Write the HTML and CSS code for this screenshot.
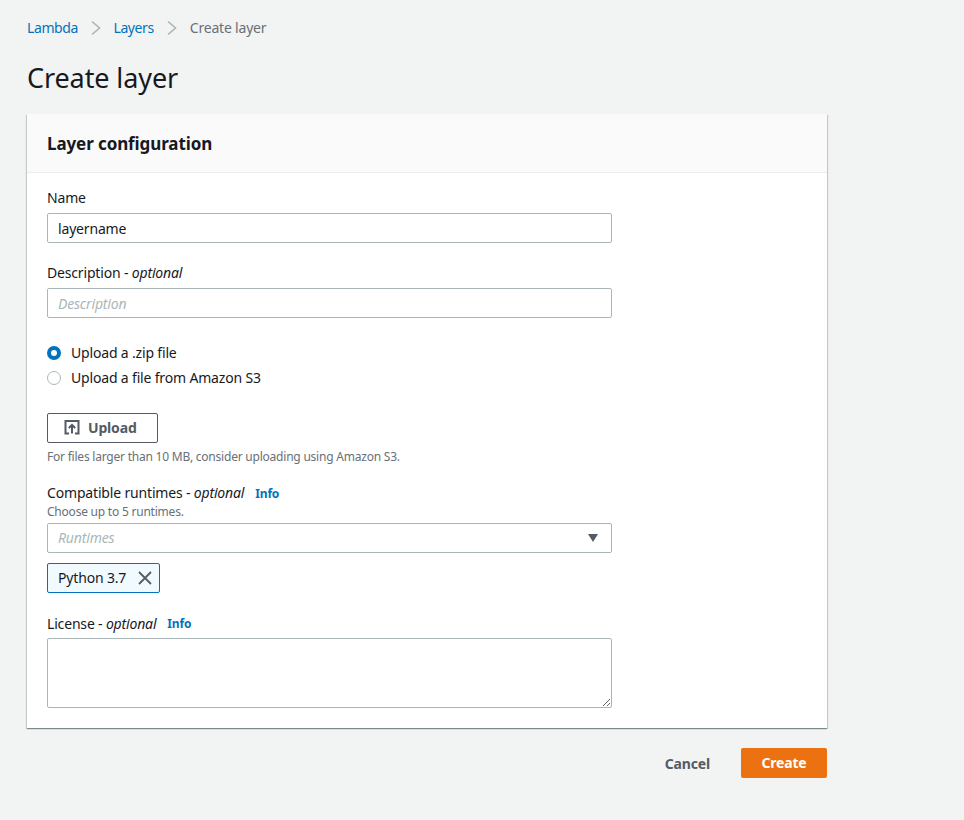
FILE: index.html
```html
<!DOCTYPE html>
<html lang="en">
  <head>
    <meta charset="UTF-8" />
    <title>Create layer</title>
    <link rel="stylesheet" href="styles.css">
  </head>
  <body>
    <nav class="breadcrumb">
      <a href="#">Lambda</a>
      <svg class="crumb-sep" width="12" height="16" viewBox="0 0 12 16"><path d="M2 1.5 L9.5 8 L2 14.5" /></svg>
      <a href="#">Layers</a>
      <svg class="crumb-sep" width="12" height="16" viewBox="0 0 12 16"><path d="M2 1.5 L9.5 8 L2 14.5" /></svg>
      <span class="crumb-current">Create layer</span>
    </nav>

    <h1>Create layer</h1>

    <section class="card">
      <header class="card-header"><h2>Layer configuration</h2></header>
      <div class="card-body">
        <div class="field">
          <label>Name</label>
          <div class="input">layername</div>
        </div>

        <div class="field">
          <label>Description - <i>optional</i></label>
          <div class="input placeholder">Description</div>
        </div>

        <div class="radios">
          <div class="radio-row"><span class="radio checked"></span>Upload a .zip file</div>
          <div class="radio-row"><span class="radio"></span>Upload a file from Amazon S3</div>
        </div>

        <button class="upload-btn">
          <svg width="16" height="16" viewBox="0 0 16 16"><path d="M5 2 H14.5 V14.5 H11 M5 14.5 H1.5 V2 H5 M8 14.5 V6 M4.8 9 L8 5.8 L11.2 9" /></svg>
          Upload
        </button>
        <p class="help upload-help">For files larger than 10 MB, consider uploading using Amazon S3.</p>

        <div class="label-row runtimes-label">
          <label>Compatible runtimes - <i>optional</i></label>
          <a class="info" href="#">Info</a>
        </div>
        <p class="help runtimes-help">Choose up to 5 runtimes.</p>
        <div class="input placeholder select">
          Runtimes
          <span class="caret"></span>
        </div>
        <div class="tag">
          Python 3.7
          <svg width="16" height="16" viewBox="0 0 16 16"><path d="M2 2 L14 14 M14 2 L2 14" /></svg>
        </div>

        <div class="label-row license-label">
          <label>License - <i>optional</i></label>
          <a class="info" href="#">Info</a>
        </div>
        <textarea class="license"></textarea>
      </div>
    </section>

    <div class="actions">
      <button class="cancel">Cancel</button>
      <button class="create">Create</button>
    </div>
  </body>
</html>
```

FILE: styles.css
```css
* {
  box-sizing: border-box;
}

body {
  margin: 0;
  padding: 0 137px 0 27px;
  background-color: #f2f3f3;
  color: #16191f;
  font-family: "Noto Sans", Arial, sans-serif;
  font-size: 14px;
  line-height: 20px;
  letter-spacing: -0.17px;
}

.breadcrumb {
  display: flex;
  align-items: center;
  height: 20px;
  margin-top: 18px;
  color: #687078;
  letter-spacing: -0.4px;
}

.breadcrumb a {
  color: #0073bb;
  text-decoration: none;
}

.crumb-current {
  margin-left: 0.5px;
  letter-spacing: -0.2px;
}

.crumb-sep {
  margin: 0 11.5px 0 12px;
}

.crumb-sep path {
  fill: none;
  stroke: #aab7b8;
  stroke-width: 1.6;
}

h1 {
  margin: 20px 0 0;
  font-size: 27px;
  font-weight: 400;
  line-height: 40px;
  letter-spacing: -0.1px;
}

.card {
  margin-top: 16px;
  background-color: #fff;
  box-shadow: 0 1px 1px 0 rgba(0, 28, 36, 0.3), 1px 1px 1px 0 rgba(0, 28, 36, 0.15), -1px 1px 1px 0 rgba(0, 28, 36, 0.15);
}

.card-header {
  height: 59px;
  padding: 2px 20px 0;
  display: flex;
  align-items: center;
  background-color: #fafafa;
  border-bottom: 1px solid #eaeded;
}

h2 {
  margin: 0;
  font-size: 17px;
  font-weight: 700;
  letter-spacing: -0.1px;
}

.card-body {
  padding: 15px 20px 20px;
}

.field {
  margin-bottom: 20px;
}

label {
  display: block;
}

.field label {
  margin-bottom: 5px;
}

.input {
  width: 565px;
  height: 30px;
  padding: 2px 10px 0;
  display: flex;
  align-items: center;
  background-color: #fff;
  border: 1px solid #aab7b8;
  border-radius: 2px;
}

.placeholder {
  color: #aab7b8;
  font-style: italic;
}

.radios {
  margin-top: 22px;
}

.radio-row {
  display: flex;
  align-items: center;
  height: 25px;
}

.radio {
  width: 14px;
  height: 14px;
  margin-right: 10px;
  background-color: #fff;
  border: 1px solid #aab7b8;
  border-radius: 50%;
}

.radio.checked {
  border: 4px solid #0073bb;
}

.upload-btn {
  display: flex;
  align-items: center;
  width: 111px;
  height: 30px;
  margin-top: 23px;
  padding: 0 0 2px 16px;
  background-color: #fff;
  color: #545b64;
  border: 1px solid #545b64;
  border-radius: 2px;
  font-family: inherit;
  font-size: 14px;
  font-weight: 700;
  letter-spacing: inherit;
}

.upload-btn svg {
  margin-right: 8px;
}

.upload-btn path {
  fill: none;
  stroke: #545b64;
  stroke-width: 2;
}

.help {
  margin: 0;
  color: #687078;
  font-size: 12px;
  line-height: 16px;
  letter-spacing: -0.22px;
}

.upload-help {
  margin-top: 6px;
}

.label-row {
  display: flex;
  align-items: flex-start;
}

.runtimes-label {
  height: 21px;
  margin-top: 18px;
}

.runtimes-label .info {
  margin-top: 1px;
}

.info {
  margin-left: 11px;
  color: #0073bb;
  font-size: 12px;
  font-weight: 700;
  text-decoration: none;
}

.runtimes-help {
  margin-bottom: 3px;
}

.select {
  position: relative;
  padding-top: 0;
}

.caret {
  position: absolute;
  right: 13px;
  top: 10px;
  border-left: 5.5px solid transparent;
  border-right: 5.5px solid transparent;
  border-top: 8px solid #545b64;
}

.tag {
  display: flex;
  align-items: center;
  width: 113px;
  height: 30px;
  margin-top: 10px;
  padding-left: 10px;
  background-color: #f1faff;
  border: 1px solid #0073bb;
  border-radius: 2px;
}

.tag svg {
  margin-left: 11px;
}

.tag path {
  fill: none;
  stroke: #545b64;
  stroke-width: 1.8;
}

.license-label {
  margin-top: 20px;
  margin-bottom: 5px;
  padding-top: 1px;
  height: 20px;
}

.license {
  display: block;
  width: 565px;
  height: 70px;
  border: 1px solid #aab7b8;
  border-radius: 2px;
  background-color: #fff;
}

.actions {
  display: flex;
  justify-content: flex-end;
  align-items: center;
  margin-top: 20px;
}

.actions button {
  height: 30px;
  border: none;
  border-radius: 2px;
  font-family: inherit;
  font-size: 14px;
  font-weight: 700;
  letter-spacing: inherit;
}

.cancel {
  margin-right: 31px;
  padding: 0;
  background: none;
  color: #545b64;
}

.create {
  width: 86px;
  padding-bottom: 2px;
  background-color: #ec7211;
  color: #fff;
}
```
